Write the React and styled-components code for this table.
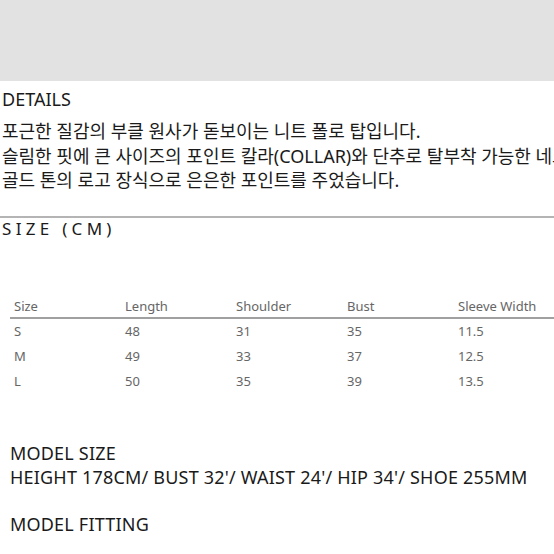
import React from 'react';
import styled, { createGlobalStyle } from 'styled-components';

const GlobalStyle = createGlobalStyle`
  html, body {
    margin: 0;
    padding: 0;
    background: #fff;
  }
  body {
    font-family: "Noto Sans", "Noto Sans CJK KR", sans-serif;
    color: #1a1a1a;
    overflow: hidden;
  }
`;

const Page = styled.div`
  width: 554px;
  height: 554px;
  overflow: hidden;
`;

const Banner = styled.div`
  height: 81px;
  background: #e2e2e2;
`;

const Details = styled.section`
  padding: 6px 0 0 2px;
`;

const Heading = styled.h2`
  margin: 0;
  font-size: 18px;
  font-weight: 400;
  line-height: 24px;
`;

const Desc = styled.p`
  margin: 8px 0 0;
  font-size: 18px;
  line-height: 24.5px;
  white-space: nowrap;
`;

const Rule = styled.hr`
  margin: 23px 0 0;
  border: none;
  border-top: 2px solid #b4b4b4;
`;

const SizeTitle = styled.h3`
  margin: 0;
  padding-left: 2px;
  font-size: 17px;
  font-weight: 400;
  letter-spacing: 4.3px;
  line-height: 22px;
`;

const Table = styled.table`
  margin: 55px 0 0 10px;
  width: 555px;
  border-collapse: collapse;
  table-layout: fixed;
  font-size: 13px;
  color: #666;
`;

const Th = styled.th`
  text-align: left;
  font-weight: 400;
  padding: 0 0 0 4px;
  height: 22px;
  border-bottom: 2px solid #a0a0a0;
`;

const Td = styled.td`
  padding: 0 0 0 4px;
  height: 25px;
`;

const Model = styled.section`
  margin-top: 47px;
  padding-left: 10px;
`;

const ModelLine = styled.div`
  font-size: 18px;
  line-height: 24.5px;
  letter-spacing: 0.2px;
  white-space: nowrap;
  margin-top: ${props => (props.$gap ? '22px' : '0')};
`;

const columns = ['Size', 'Length', 'Shoulder', 'Bust', 'Sleeve Width'];
const rows = [
  ['S', '48', '31', '35', '11.5'],
  ['M', '49', '33', '37', '12.5'],
  ['L', '50', '35', '39', '13.5'],
];

export default function App() {
  return (
    <Page>
      <GlobalStyle />
      <Banner />
      <Details>
        <Heading>DETAILS</Heading>
        <Desc>
          포근한 질감의 부클 원사가 돋보이는 니트 폴로 탑입니다.
          <br />
          슬림한 핏에 큰 사이즈의 포인트 칼라(COLLAR)와 단추로 탈부착 가능한 네크 스카프를 매치했으며
          <br />
          골드 톤의 로고 장식으로 은은한 포인트를 주었습니다.
        </Desc>
      </Details>
      <Rule />
      <SizeTitle>SIZE (CM)</SizeTitle>
      <Table>
        <thead>
          <tr>
            {columns.map(c => (
              <Th key={c}>{c}</Th>
            ))}
          </tr>
        </thead>
        <tbody>
          {rows.map(r => (
            <tr key={r[0]}>
              {r.map((v, i) => (
                <Td key={i}>{v}</Td>
              ))}
            </tr>
          ))}
        </tbody>
      </Table>
      <Model>
        <ModelLine>MODEL SIZE</ModelLine>
        <ModelLine>HEIGHT 178CM/ BUST 32'/ WAIST 24'/ HIP 34'/ SHOE 255MM</ModelLine>
        <ModelLine $gap>MODEL FITTING</ModelLine>
      </Model>
    </Page>
  );
}
